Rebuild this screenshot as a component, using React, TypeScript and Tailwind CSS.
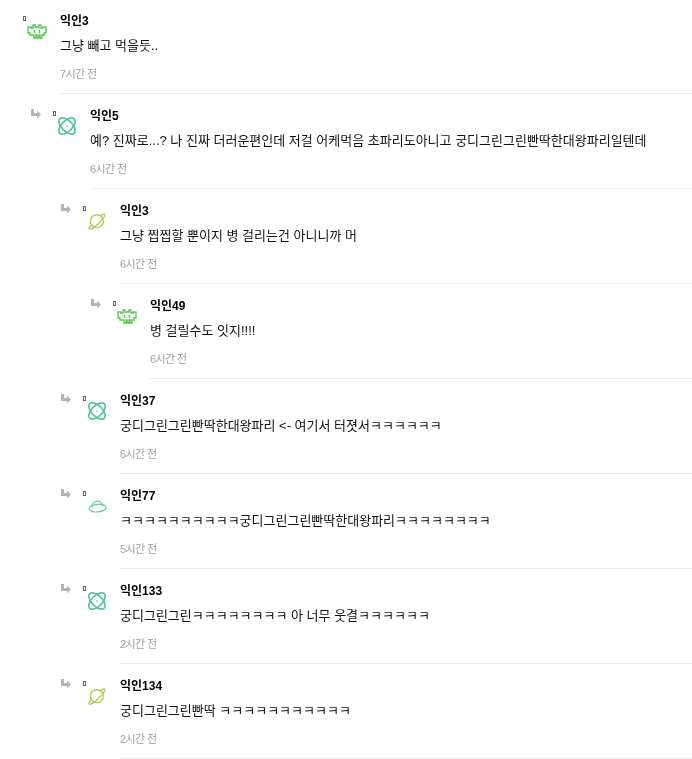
const font = { fontFamily: '"Liberation Sans", "Noto Sans CJK KR", sans-serif' };

function Invader() {
  return (
    <svg viewBox="0 0 20 15" className="h-[15px] w-[20px]" fill="#f2fbf2" stroke="#55c655" strokeWidth="1.300">
      <path d="M6 1h2v2h4V1h2v3h2V3h3v6h-2v2h-2v3h-2v-3h-1v3h-2v-3H9v3H7v-3H5H3V9H1V3h3v1h2z" />
      <path d="M7.500 6v3M12.500 6v3" />
    </svg>
  );
}
function Atom() {
  return (
    <svg viewBox="0 0 22 22" className="h-[18px] w-[18px]" fill="none" stroke="#47bfa0" strokeWidth="1.900">
      <ellipse cx="11" cy="11" rx="12.500" ry="6.500" transform="rotate(45 11 11)" />
      <ellipse cx="11" cy="11" rx="12.500" ry="6.500" transform="rotate(-45 11 11)" />
      <circle cx="11" cy="11" r="1" fill="#47bfa0" stroke="none" />
    </svg>
  );
}
function Planet() {
  return (
    <svg viewBox="0 0 20 20" className="h-[18px] w-[18px]" fill="none" stroke="#b4c95c" strokeWidth="1.500">
      <circle cx="9.800" cy="10.200" r="7.200" />
      <path d="M4 14.500C1.500 16.500.5 18 1.200 18.800c1.200 1.200 6-1.600 10.500-6.100S19.600 3.500 18.600 2.400C17.900 1.700 16.300 2.500 14.500 4.500" />
    </svg>
  );
}
function Ufo() {
  return (
    <svg viewBox="0 0 20 13" className="h-[13px] w-[19px]" fill="none" stroke="#63cfa8" strokeWidth="1.300">
      <g transform="rotate(-6 10 7)">
        <path d="M4.500 6.500C4.500 3 7 .8 10 .8s5.500 2.200 5.500 5.700" />
        <ellipse cx="10" cy="8.200" rx="9" ry="4" />
        <path d="M5 8.500h.1M10 10h.1M15 8.500h.1" />
      </g>
    </svg>
  );
}
function ReplyArrow() {
  return (
    <svg viewBox="0 0 10 10" className="h-[10px] w-[10px]" fill="#b4b4b4">
      <path d="M0 0h3v4h3V1.500L10 5.500 6 9.500V7H0z" />
    </svg>
  );
}

const avatars = {
  invader: <Invader />,
  atom: <Atom />,
  planet: <Planet />,
  ufo: <Ufo />,
};

type Item = { depth: number; name: string; text: string; time: string; avatar: keyof typeof avatars };

const items: Item[] = [
  { depth: 0, name: "익인3", text: "그냥 빼고 먹을듯..", time: "7시간 전", avatar: "invader" },
  { depth: 1, name: "익인5", text: "예? 진짜로...? 나 진짜 더러운편인데 저걸 어케먹음 초파리도아니고 궁디그린그린빤딱한대왕파리일텐데", time: "6시간 전", avatar: "atom" },
  { depth: 2, name: "익인3", text: "그냥 찝찝할 뿐이지 병 걸리는건 아니니까 머", time: "6시간 전", avatar: "planet" },
  { depth: 3, name: "익인49", text: "병 걸릴수도 잇지!!!!", time: "6시간 전", avatar: "invader" },
  { depth: 2, name: "익인37", text: "궁디그린그린빤딱한대왕파리 <- 여기서 터졋서ㅋㅋㅋㅋㅋㅋ", time: "6시간 전", avatar: "atom" },
  { depth: 2, name: "익인77", text: "ㅋㅋㅋㅋㅋㅋㅋㅋㅋㅋ궁디그린그린빤딱한대왕파리ㅋㅋㅋㅋㅋㅋㅋㅋ", time: "5시간 전", avatar: "ufo" },
  { depth: 2, name: "익인133", text: "궁디그린그린ㅋㅋㅋㅋㅋㅋㅋㅋ 아 너무 웃결ㅋㅋㅋㅋㅋㅋ", time: "2시간 전", avatar: "atom" },
  { depth: 2, name: "익인134", text: "궁디그린그린빤딱 ㅋㅋㅋㅋㅋㅋㅋㅋㅋㅋㅋ", time: "2시간 전", avatar: "planet" },
];

const indent = ["pl-0", "pl-[30px]", "pl-[60px]", "pl-[90px]"];

function Row({ item }: { item: Item }) {
  return (
    <div className={`flex h-[95px] ${indent[item.depth]}`}>
      <div className="relative w-[60px] shrink-0">
        {item.depth > 0 && (
          <span className="absolute left-[1px] top-[15px]">
            <ReplyArrow />
          </span>
        )}
        <span className="absolute left-[23px] top-[17px] h-[5px] w-[3px] border border-[#666]" />
        <span className="absolute left-[26px] top-[21px] flex h-[22px] w-[22px] items-center justify-center">
          {avatars[item.avatar]}
        </span>
      </div>
      <div className="flex min-w-0 flex-1 flex-col border-b border-[#ececec] pt-[15px] antialiased [will-change:transform]">
        <div className="text-[12px] font-bold leading-[15px] text-black">{item.name}</div>
        <div className="mt-[8px] whitespace-nowrap text-[13px] leading-[18px] text-[#111]">{item.text}</div>
        <div className="mt-[12px] text-[11px] leading-[14px] tracking-[-0.6px] text-[#a0a0a0]">{item.time}</div>
      </div>
    </div>
  );
}

export default function App() {
  return (
    <div className="h-[759px] w-[692px] overflow-hidden bg-white" style={font}>
      <div className="-mt-px">
        {items.map((item, i) => (
          <Row key={i} item={item} />
        ))}
      </div>
    </div>
  );
}
